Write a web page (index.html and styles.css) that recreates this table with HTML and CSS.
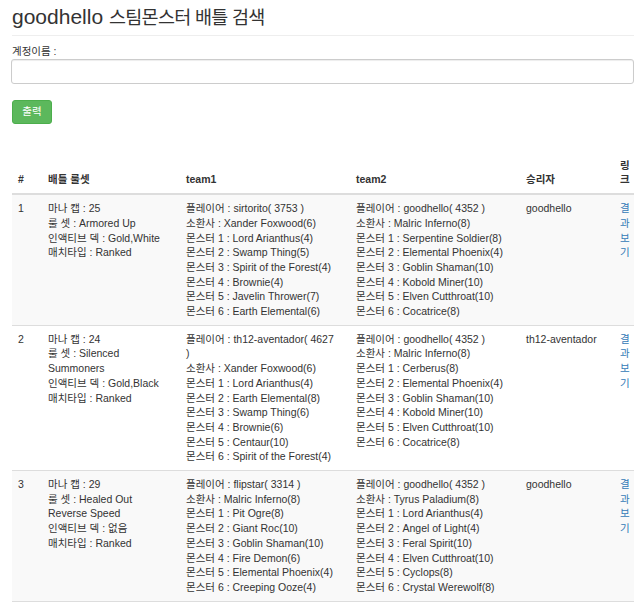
FILE: index.html
```html
<!DOCTYPE html>
<html lang="ko">
<head>
<meta charset="utf-8">
<title>goodhello 스팀몬스터 배틀 검색</title>
<link rel="stylesheet" href="styles.css">
</head>
<body>
<div class="container">
  <h1 class="page-header">goodhello <span class="ko">스팀몬스터 배틀 검색</span></h1>
  <form class="search-form">
    <div class="form-group">
      <label class="field-label" for="account">계정이름 :</label>
      <input class="form-control" id="account" type="text">
    </div>
    <button class="btn-success" type="button">출력</button>
  </form>

  <table class="battle-table">
    <colgroup>
      <col class="c-num">
      <col class="c-rule">
      <col class="c-team">
      <col class="c-team">
      <col class="c-win">
      <col class="c-link">
    </colgroup>
    <thead>
      <tr>
        <th>#</th>
        <th>배틀 룰셋</th>
        <th>team1</th>
        <th>team2</th>
        <th>승리자</th>
        <th>링크</th>
      </tr>
    </thead>
    <tbody>
      <tr>
        <td>1</td>
        <td>마나 캡 : 25<br>룰 셋 : Armored Up<br>인액티브 덱 : Gold,White<br>매치타입 : Ranked</td>
        <td>플레이어 : sirtorito( 3753 )<br>소환사 : Xander Foxwood(6)<br>몬스터 1 : Lord Arianthus(4)<br>몬스터 2 : Swamp Thing(5)<br>몬스터 3 : Spirit of the Forest(4)<br>몬스터 4 : Brownie(4)<br>몬스터 5 : Javelin Thrower(7)<br>몬스터 6 : Earth Elemental(6)</td>
        <td>플레이어 : goodhello( 4352 )<br>소환사 : Malric Inferno(8)<br>몬스터 1 : Serpentine Soldier(8)<br>몬스터 2 : Elemental Phoenix(4)<br>몬스터 3 : Goblin Shaman(10)<br>몬스터 4 : Kobold Miner(10)<br>몬스터 5 : Elven Cutthroat(10)<br>몬스터 6 : Cocatrice(8)</td>
        <td>goodhello</td>
        <td><a class="result-link" href="#">결과보기</a></td>
      </tr>
      <tr>
        <td>2</td>
        <td>마나 캡 : 24<br>룰 셋 : Silenced Summoners<br>인액티브 덱 : Gold,Black<br>매치타입 : Ranked</td>
        <td>플레이어 : th12-aventador( 4627<br>)<br>소환사 : Xander Foxwood(6)<br>몬스터 1 : Lord Arianthus(4)<br>몬스터 2 : Earth Elemental(8)<br>몬스터 3 : Swamp Thing(6)<br>몬스터 4 : Brownie(6)<br>몬스터 5 : Centaur(10)<br>몬스터 6 : Spirit of the Forest(4)</td>
        <td>플레이어 : goodhello( 4352 )<br>소환사 : Malric Inferno(8)<br>몬스터 1 : Cerberus(8)<br>몬스터 2 : Elemental Phoenix(4)<br>몬스터 3 : Goblin Shaman(10)<br>몬스터 4 : Kobold Miner(10)<br>몬스터 5 : Elven Cutthroat(10)<br>몬스터 6 : Cocatrice(8)</td>
        <td>th12-aventador</td>
        <td><a class="result-link" href="#">결과보기</a></td>
      </tr>
      <tr>
        <td>3</td>
        <td>마나 캡 : 29<br>룰 셋 : Healed Out Reverse Speed<br>인액티브 덱 : 없음<br>매치타입 : Ranked</td>
        <td>플레이어 : flipstar( 3314 )<br>소환사 : Malric Inferno(8)<br>몬스터 1 : Pit Ogre(8)<br>몬스터 2 : Giant Roc(10)<br>몬스터 3 : Goblin Shaman(10)<br>몬스터 4 : Fire Demon(6)<br>몬스터 5 : Elemental Phoenix(4)<br>몬스터 6 : Creeping Ooze(4)</td>
        <td>플레이어 : goodhello( 4352 )<br>소환사 : Tyrus Paladium(8)<br>몬스터 1 : Lord Arianthus(4)<br>몬스터 2 : Angel of Light(4)<br>몬스터 3 : Feral Spirit(10)<br>몬스터 4 : Elven Cutthroat(10)<br>몬스터 5 : Cyclops(8)<br>몬스터 6 : Crystal Werewolf(8)</td>
        <td>goodhello</td>
        <td><a class="result-link" href="#">결과보기</a></td>
      </tr>
    </tbody>
  </table>
</div>
</body>
</html>
```

FILE: styles.css
```css
* { box-sizing: border-box; }

html, body {
  margin: 0;
  padding: 0;
  background: #fff;
}

body {
  font-family: "Liberation Sans", "Noto Sans CJK KR", sans-serif;
  font-size: 10.5px;
  line-height: 14.7px;
  color: #333;
}

.container {
  padding: 0 6px 0 12px;
}

.page-header {
  margin: 5px 0 8px;
  padding-bottom: 6px;
  border-bottom: 1px solid #eee;
  font-size: 21px;
  font-weight: 400;
  line-height: 23px;
  color: #333;
}

.page-header .ko {
  font-size: 18.5px;
  letter-spacing: -0.7px;
}

.search-form {
  display: flex;
  flex-direction: column;
  align-items: flex-start;
}

.form-group {
  align-self: stretch;
  margin-bottom: 16px;
}

.field-label {
  display: block;
  margin-bottom: 0;
  font-weight: 400;
}

.form-control {
  display: block;
  width: calc(100% + 1px);
  margin-left: -1px;
  height: 25px;
  padding: 4px 9px;
  font: inherit;
  color: #555;
  background: #fff;
  border: 1px solid #ccc;
  border-radius: 3px;
  box-shadow: inset 0 1px 1px rgba(0, 0, 0, .075);
}

.btn-success {
  width: 40px;
  height: 24px;
  padding: 0;
  font: inherit;
  color: #fff;
  background: #5cb85c;
  border: 1px solid #4cae4c;
  border-radius: 3px;
}

.battle-table {
  width: 100%;
  margin-top: 28px;
  border-collapse: collapse;
  border-spacing: 0;
  table-layout: fixed;
}

.c-num { width: 30px; }
.c-rule { width: 138px; }
.c-team { width: 170px; }
.c-win { width: 94px; }
.c-link { width: 20px; }

.battle-table th,
.battle-table td {
  padding: 6px;
  text-align: left;
  vertical-align: top;
  line-height: 14.7px;
}

.battle-table th {
  vertical-align: bottom;
  font-weight: 700;
  border-bottom: 2px solid #ddd;
}

.battle-table td {
  border-top: 1px solid #ddd;
}

.battle-table thead + tbody tr:first-child td {
  border-top: 0;
}

.battle-table tbody tr:nth-child(odd) {
  background: #f9f9f9;
}

.battle-table tbody tr:last-child td {
  border-bottom: 1px solid #ddd;
}

.result-link {
  color: #337ab7;
  text-decoration: none;
}
```
